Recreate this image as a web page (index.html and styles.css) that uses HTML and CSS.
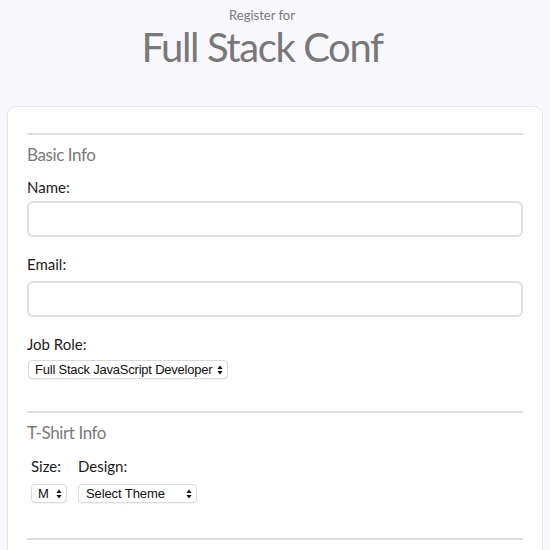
FILE: index.html
```html
<!DOCTYPE html>
<html lang="en">
<head>
<meta charset="utf-8">
<title>Full Stack Conf</title>
<link rel="stylesheet" href="styles.css">
</head>
<body>
<header class="masthead">
  <p class="eyebrow">Register for</p>
  <h1 class="title">Full Stack Conf</h1>
</header>
<form class="card">
  <section class="group">
    <h2 class="group-title">Basic Info</h2>
    <label class="label" for="name">Name:</label>
    <input class="text-input" id="name" type="text">
    <label class="label label-email" for="mail">Email:</label>
    <input class="text-input" id="mail" type="email">
    <label class="label label-job" for="title">Job Role:</label>
    <span class="select-wrap">
      <select class="select select-job" id="title">
        <option>Full Stack JavaScript Developer</option>
      </select>
      <svg class="arrows" width="6" height="10" viewBox="0 0 6 10"><path d="M3 0.5 L5.6 4 H0.4 Z M3 9.5 L5.6 6 H0.4 Z" fill="#111"/></svg>
    </span>
  </section>
  <section class="group group-shirt">
    <h2 class="group-title">T-Shirt Info</h2>
    <div class="shirt-row">
      <div class="shirt-field">
        <label class="label" for="size">Size:</label>
        <span class="select-wrap">
          <select class="select select-size" id="size">
            <option>M</option>
          </select>
          <svg class="arrows" width="6" height="10" viewBox="0 0 6 10"><path d="M3 0.5 L5.6 4 H0.4 Z M3 9.5 L5.6 6 H0.4 Z" fill="#111"/></svg>
        </span>
      </div>
      <div class="shirt-field">
        <label class="label" for="design">Design:</label>
        <span class="select-wrap">
          <select class="select select-design" id="design">
            <option>Select Theme</option>
          </select>
          <svg class="arrows" width="6" height="10" viewBox="0 0 6 10"><path d="M3 0.5 L5.6 4 H0.4 Z M3 9.5 L5.6 6 H0.4 Z" fill="#111"/></svg>
        </span>
      </div>
    </div>
  </section>
  <section class="group group-next"></section>
</form>
</body>
</html>
```
FILE: styles.css
```css
* { box-sizing: border-box; }
html, body { height: 100%; }
body {
  margin: 0;
  background: #f8f8fd;
  font-family: Lato, "Noto Sans", sans-serif;
  color: #1c1c1c;
  overflow: hidden;
}
.masthead {
  text-align: center;
  padding-top: 7px;
  padding-right: 26px;
  color: #787878;
}
.eyebrow {
  margin: 0;
  font-size: 13px;
  line-height: 16px;
}
.title {
  margin: 0;
  font-size: 40px;
  letter-spacing: -1.4px;
  font-weight: 400;
  line-height: 48px;
}
.card {
  margin: 35px 7px 0;
  background: #fff;
  border: 1px solid #e6e6ec;
  border-radius: 9px;
  padding: 26px 19px 0;
  height: 460px;
}
.group {
  border-top: 2px solid #dedede;
  padding-top: 8px;
  display: flex;
  flex-direction: column;
  align-items: flex-start;
}
.group-title {
  margin: 0;
  font-size: 17px;
  letter-spacing: -0.4px;
  font-weight: 400;
  line-height: 24px;
  color: #7a7a7a;
}
.label {
  display: block;
  font-size: 15px;
  line-height: 20px;
  margin-top: 10px;
  margin-bottom: 4px;
}
.label-email { margin-top: 17px; margin-bottom: 7px; }
.label-job { margin-top: 17px; margin-bottom: 6px; }
.text-input {
  width: 100%;
  height: 36px;
  border: 2px solid #dfe0e2;
  border-radius: 6px;
  background: #fff;
  font: inherit;
  outline: none;
}
.select-wrap {
  position: relative;
  display: inline-flex;
}
.select {
  appearance: none;
  -webkit-appearance: none;
  font-family: "Liberation Sans", Arial, sans-serif;
  font-size: 13px;
  letter-spacing: -0.1px;
  color: #111;
  height: 19px;
  line-height: 17px;
  padding: 0 10px 0 6px;
  border: 1px solid #dadada;
  border-radius: 4px;
  background: #fff;
  box-shadow: 0 1px 1px rgba(0,0,0,0.05);
  outline: none;
}
.select-job { width: 200px; margin-left: 1px; letter-spacing: -0.22px; }
.select-size { width: 36px; }
.select-design { width: 119px; padding-left: 7px; }
.arrows {
  position: absolute;
  right: 5px;
  top: 5px;
  pointer-events: none;
}
.group-shirt {
  margin-top: 32px;
}
.shirt-row {
  display: flex;
  gap: 11px;
  margin-left: 4px;
  margin-top: 11px;
}
.shirt-field {
  display: flex;
  flex-direction: column;
  align-items: flex-start;
}
.shirt-field .label { margin: 0 0 8px 0; }
.group-next {
  margin-top: 35px;
}
```
